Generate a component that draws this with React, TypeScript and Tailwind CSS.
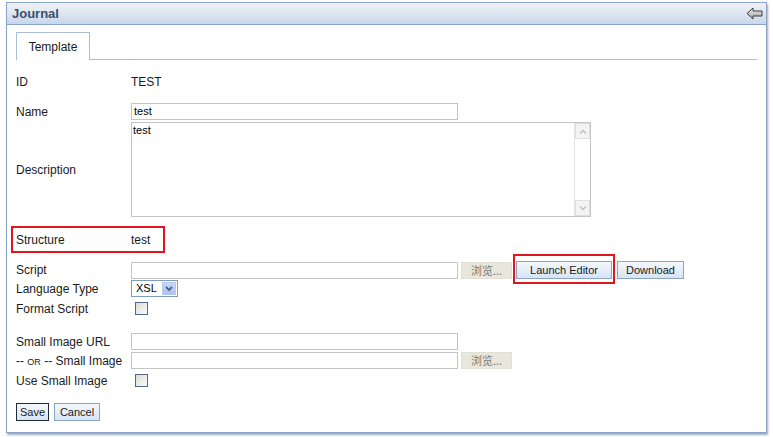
import React from 'react';

const font = { fontFamily: '"Liberation Sans", Arial, sans-serif' };

const Label: React.FC<{ children: React.ReactNode }> = ({ children }) => (
  <div className="w-[115px] shrink-0 text-[12px] text-[#1a1a1a]">{children}</div>
);

const TextInput: React.FC<{ value?: string }> = ({ value = '' }) => (
  <div className="w-[327px] h-[17px] border border-[#c4c4c4] bg-white text-[11px] leading-[15px] px-[2px] text-black">
    {value}
  </div>
);

const Browse = () => (
  <div
    className="ml-[3px] w-[51px] h-[17px] bg-[#e9e7dc] border border-[#e2e0d4] text-[11px] leading-[15px] text-[#7a7a70] text-center"
    style={{ fontFamily: '"Noto Sans CJK SC", "Liberation Sans", sans-serif' }}
  >
    浏览...
  </div>
);

const Checkbox = () => (
  <div className="ml-[4px] w-[13px] h-[13px] border border-[#50698d] bg-gradient-to-br from-[#dcdcd6] to-[#fbfbf9]" />
);

const Btn: React.FC<{ children: React.ReactNode; className?: string }> = ({ children, className = '' }) => (
  <div
    className={`h-[18px] border bg-gradient-to-b from-[#f4f8fd] to-[#d7e4f4] text-[11px] leading-[16px] text-[#1a1a1a] text-center ${className}`}
  >
    {children}
  </div>
);

export default function App() {
  return (
    <div className="w-[773px] h-[437px] bg-white pt-[2px] pl-[6px]" style={font}>
      <div className="w-[761px] h-[431px] border border-[#8aa3c6] bg-white shadow-[1px_2px_2px_rgba(80,100,130,0.55)]">
        {/* header */}
        <div className="h-[22px] flex items-center justify-between border-b border-[#8aa3c6] bg-gradient-to-b from-[#eef1f6] via-[#dfe6f0] to-[#c6d6ee] pl-[5px] pr-[3px]">
          <span className="text-[13px] font-bold text-[#3a4e6c]">Journal</span>
          <svg width="17" height="13" viewBox="0 0 17 13">
            <defs>
              <linearGradient id="ag" x1="0" y1="0" x2="0" y2="1">
                <stop offset="0" stopColor="#f4f4f4" />
                <stop offset="1" stopColor="#9a9a9a" />
              </linearGradient>
            </defs>
            <path d="M1 6.5 L7 1 V4 H16 V9 H7 V12 Z" fill="url(#ag)" stroke="#3c3c3c" strokeWidth="1" strokeLinejoin="round" />
          </svg>
        </div>

        {/* tabs */}
        <div className="mt-[7px] mx-[9px] h-[28px] flex items-end border-b border-[#a9bdd6]">
          <div className="w-[74px] h-[28px] -mb-px border border-b-0 border-[#a9bdd6] bg-white text-[12px] text-[#1a1a1a] flex items-center justify-center">
            Template
          </div>
        </div>

        <div className="pl-[9px]">
          <div className="mt-[13px] h-[18px] flex items-center">
            <Label>ID</Label>
            <div className="text-[12px] text-[#1a1a1a]">TEST</div>
          </div>

          <div className="mt-[12px] h-[17px] flex items-center">
            <Label>Name</Label>
            <TextInput value="test" />
          </div>

          <div className="mt-[2px] h-[95px] flex items-center">
            <Label>Description</Label>
            <div className="w-[460px] h-[95px] border border-[#c4c4c4] bg-white flex">
              <div className="flex-1 text-[11px] leading-[13px] px-[1px] pt-[1px] text-black">test</div>
              <div className="w-[16px] border-l border-[#e4e4e4] flex flex-col justify-between">
                <div className="h-[16px] bg-[#f3f3f3] border border-[#dedede] flex items-center justify-center">
                  <svg width="8" height="5" viewBox="0 0 8 5"><path d="M1 4.5 L4 1.5 L7 4.5" fill="none" stroke="#bdbdbd" strokeWidth="1.4" /></svg>
                </div>
                <div className="h-[16px] bg-[#f3f3f3] border border-[#dedede] flex items-center justify-center">
                  <svg width="8" height="5" viewBox="0 0 8 5"><path d="M1 0.5 L4 3.5 L7 0.5" fill="none" stroke="#bdbdbd" strokeWidth="1.4" /></svg>
                </div>
              </div>
            </div>
          </div>

          <div className="mt-[9px] -ml-[5px] w-[154px] h-[27px] border-2 border-[#e0161c] pl-[3px] flex items-center">
            <div className="w-[115px] shrink-0 text-[12px] text-[#1a1a1a]">Structure</div>
            <div className="text-[12px] text-[#1a1a1a]">test</div>
          </div>

          <div className="mt-[8px] h-[18px] flex items-center">
            <Label>Script</Label>
            <TextInput />
            <Browse />
            <div className="relative ml-[4px]">
              <Btn className="w-[96px] border-[#8ca4c4]">Launch Editor</Btn>
              <div className="absolute -left-[3px] -right-[3px] -top-[7px] -bottom-[5px] border-2 border-[#e0161c] pointer-events-none" />
            </div>
            <Btn className="ml-[5px] w-[67px] border-[#8ca4c4]">Download</Btn>
          </div>

          <div className="mt-[1px] h-[17px] flex items-center">
            <Label>Language Type</Label>
            <div className="w-[47px] h-[17px] border border-[#7f9db9] bg-white flex items-center justify-between pl-[4px] pr-px">
              <span className="text-[11px] text-black">XSL</span>
              <div className="w-[14px] h-[13px] bg-gradient-to-b from-[#c6d6fb] to-[#aec3f2] border border-[#b7c9ef] flex items-center justify-center">
                <svg width="8" height="6" viewBox="0 0 8 6"><path d="M1 1 L4 4 L7 1" fill="none" stroke="#4d6185" strokeWidth="1.8" /></svg>
              </div>
            </div>
          </div>

          <div className="mt-[3px] h-[17px] flex items-center">
            <Label>Format Script</Label>
            <Checkbox />
          </div>

          <div className="mt-[16px] h-[17px] flex items-center">
            <Label>Small Image URL</Label>
            <TextInput />
          </div>

          <div className="mt-[2px] h-[17px] flex items-center">
            <Label>
              -- <span className="text-[9px]">OR</span> -- Small Image
            </Label>
            <TextInput />
            <Browse />
          </div>

          <div className="mt-[3px] h-[17px] flex items-center">
            <Label>Use Small Image</Label>
            <Checkbox />
          </div>

          <div className="mt-[14px] flex items-center">
            <Btn className="w-[33px] border-[#1f2a38]">Save</Btn>
            <Btn className="ml-[5px] w-[46px] border-[#8ca4c4]">Cancel</Btn>
          </div>
        </div>
      </div>
    </div>
  );
}
